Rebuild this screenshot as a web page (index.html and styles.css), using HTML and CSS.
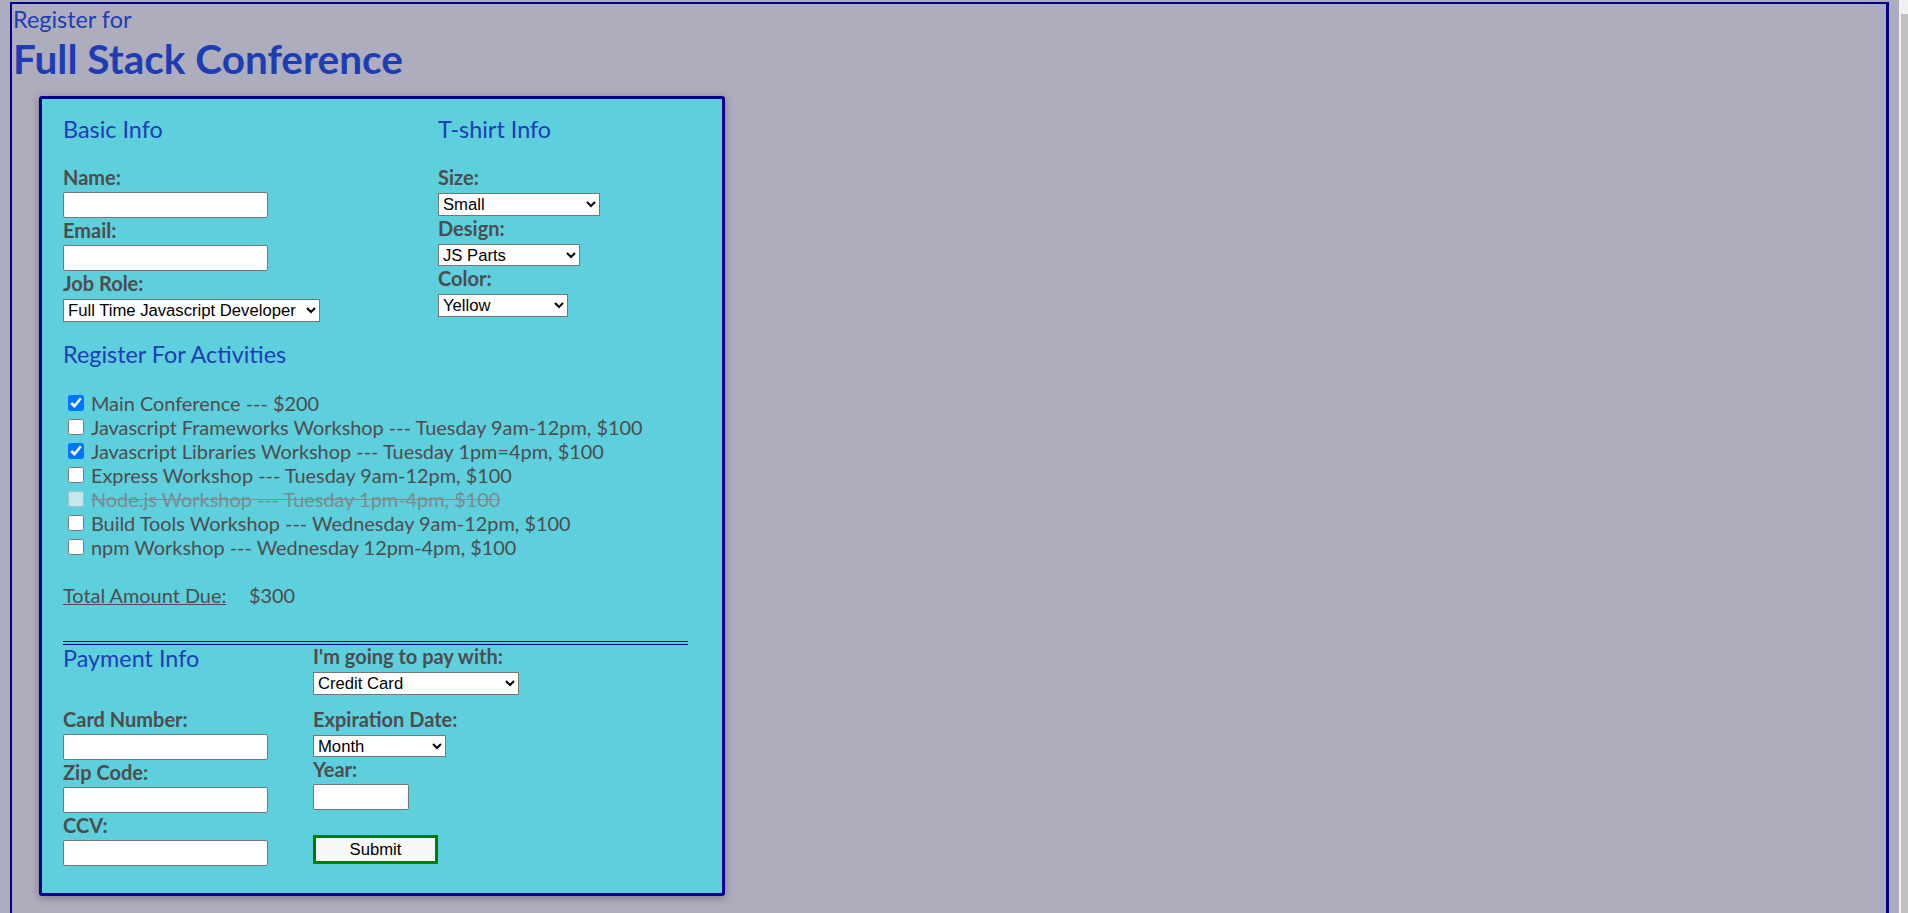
FILE: index.html
```html
<!DOCTYPE html>
<html lang="en">
<head>
<meta charset="utf-8">
<title>Register for Full Stack Conference</title>
<link rel="stylesheet" href="styles.css">
</head>
<body>
<div class="page">
  <header class="masthead">
    <span class="kicker">Register for</span>
    <h1 class="title">Full Stack Conference</h1>
  </header>

  <form class="reg-form" action="#">
    <div class="top-grid">
      <section class="col">
        <h2 class="sec-title">Basic Info</h2>
        <label class="field-label" for="name">Name:</label>
        <input class="text-input" id="name" type="text">
        <label class="field-label" for="mail">Email:</label>
        <input class="text-input" id="mail" type="email">
        <label class="field-label" for="title">Job Role:</label>
        <select class="select sel-job" id="title">
          <option>Full Time Javascript Developer</option>
          <option>Front End Developer</option>
          <option>Back End Developer</option>
          <option>Student</option>
          <option>Other</option>
        </select>
      </section>

      <section class="col">
        <h2 class="sec-title">T-shirt Info</h2>
        <label class="field-label" for="size">Size:</label>
        <select class="select sel-size" id="size">
          <option>Small</option>
          <option>Medium</option>
          <option>Large</option>
          <option>Extra Large</option>
        </select>
        <label class="field-label" for="design">Design:</label>
        <select class="select sel-design" id="design">
          <option>JS Parts</option>
          <option>JS Puns</option>
        </select>
        <label class="field-label" for="color">Color:</label>
        <select class="select sel-color" id="color">
          <option>Yellow</option>
          <option>Cornflower Blue</option>
          <option>Dark Slate Grey</option>
        </select>
      </section>
    </div>

    <section class="activities">
      <h2 class="sec-title act-title">Register For Activities</h2>
      <label class="activity"><input class="check" type="checkbox" checked>Main Conference --- $200</label>
      <label class="activity"><input class="check" type="checkbox">Javascript Frameworks Workshop --- Tuesday 9am-12pm, $100</label>
      <label class="activity"><input class="check" type="checkbox" checked>Javascript Libraries Workshop --- Tuesday 1pm=4pm, $100</label>
      <label class="activity"><input class="check" type="checkbox">Express Workshop --- Tuesday 9am-12pm, $100</label>
      <label class="activity is-off"><input class="check" type="checkbox" disabled>Node.js Workshop --- Tuesday 1pm-4pm, $100</label>
      <label class="activity"><input class="check" type="checkbox">Build Tools Workshop --- Wednesday 9am-12pm, $100</label>
      <label class="activity"><input class="check" type="checkbox">npm Workshop --- Wednesday 12pm-4pm, $100</label>
      <p class="total"><span class="total-label">Total Amount Due:</span><span class="total-value">$300</span></p>
    </section>

    <hr class="divider">

    <div class="pay-grid">
      <h2 class="sec-title pay-title">Payment Info</h2>
      <div class="col">
        <label class="field-label" for="payment">I'm going to pay with:</label>
        <select class="select sel-pay" id="payment">
          <option>Credit Card</option>
          <option>PayPal</option>
          <option>Bitcoin</option>
        </select>
      </div>
      <div class="col">
        <label class="field-label" for="cc-num">Card Number:</label>
        <input class="text-input" id="cc-num" type="text">
        <label class="field-label" for="zip">Zip Code:</label>
        <input class="text-input" id="zip" type="text">
        <label class="field-label" for="cvv">CCV:</label>
        <input class="text-input" id="cvv" type="text">
      </div>
      <div class="col">
        <label class="field-label" for="exp-month">Expiration Date:</label>
        <select class="select sel-month" id="exp-month">
          <option>Month</option>
          <option>1 - January</option>
          <option>2 - February</option>
        </select>
        <label class="field-label" for="exp-year">Year:</label>
        <input class="text-input year-input" id="exp-year" type="text">
        <button class="submit-btn" type="submit">Submit</button>
      </div>
    </div>
  </form>
</div>
<div class="scrollbar" aria-hidden="true"><div class="scroll-thumb"></div></div>
</body>
</html>
```
FILE: styles.css
```css
html {
  background: #adadbe;
  overflow: hidden;
}

body {
  margin: 2px 0 0 10px;
  font-family: Lato, "Open Sans", "Liberation Sans", sans-serif;
}

.page {
  width: 1879px;
  box-sizing: border-box;
  border: 2px solid #00008b;
  border-right-width: 3px;
  padding: 0 0 40px 1px;
}

.kicker {
  display: block;
  margin-top: 1.7px;
  font-size: 23.4px;
  line-height: 26.4px;
  color: #1d3db4;
}

.title {
  margin: 2.8px 0 0;
  font-size: 40.5px;
  line-height: 48px;
  font-weight: 700;
  color: #1d3db4;
}

.reg-form {
  margin: 13.5px 0 0 26px;
  width: 686px;
  box-sizing: border-box;
  background: #5ecfdd;
  border: 3px solid #00008b;
  border-radius: 3px;
  padding: 17px 21px 26px;
  box-shadow: 0 2px 8px rgba(0, 0, 0, 0.3);
}

.top-grid {
  display: grid;
  grid-template-columns: 375px 1fr;
}

.sec-title {
  margin: 0 0 24px;
  font-size: 23.4px;
  line-height: 26px;
  font-weight: 400;
  color: #1d3db4;
}

.field-label {
  display: block;
  padding-bottom: 2.5px;
  font-size: 20px;
  line-height: 23.5px;
  font-weight: 700;
  color: #4d4d4d;
}

.text-input {
  display: block;
  box-sizing: border-box;
  width: 205px;
  height: 26px;
  margin: 0 0 1px;
  padding: 1px 3px;
  border: 1px solid #767676;
  border-radius: 2px;
  background: #fff;
  font: 16.67px "Liberation Sans", Arial, sans-serif;
}

.year-input {
  width: 96px;
}

.select {
  display: block;
  box-sizing: border-box;
  height: 22.5px;
  margin: 1px 0;
  font: 16.67px "Liberation Sans", Arial, sans-serif;
  color: #000;
  background: #fff;
}

.sel-job { width: 257px; }
.sel-size { width: 162px; }
.sel-design { width: 142px; }
.sel-color { width: 130px; }
.sel-pay { width: 206px; }
.sel-month { width: 133px; }

.act-title {
  margin-top: 18.5px;
}

.activity {
  display: block;
  font-size: 19.9px;
  line-height: 24px;
  color: #4d4d4d;
}

.check {
  width: 16px;
  height: 16px;
  margin: 0 6.5px 0 5.4px;
  vertical-align: baseline;
}

.is-off {
  color: #7b8b8e;
  text-decoration: line-through;
}

.total {
  margin: 24px 0 0;
  font-size: 19.9px;
  line-height: 24px;
  color: #4d4d4d;
}

.total-label {
  text-decoration: underline;
}

.total-value {
  margin-left: 22.5px;
}

.divider {
  margin: 33.2px 0 0;
  width: 625px;
  height: 0;
  border: 0;
  border-top: 4px double #00008b;
}

.pay-grid {
  display: grid;
  grid-template-columns: 250px 1fr;
  row-gap: 12px;
  margin-top: 0.5px;
}

.pay-title {
  margin: 0;
}

.submit-btn {
  display: block;
  box-sizing: border-box;
  width: 125px;
  height: 29.4px;
  margin-top: 25px;
  border: 3px solid #008000;
  background: #f8f8f8;
  color: #000;
  font: 16.67px "Liberation Sans", Arial, sans-serif;
  padding: 0;
}

.scrollbar {
  position: fixed;
  top: 0;
  right: 0;
  bottom: 0;
  width: 9px;
  box-sizing: border-box;
  padding: 14px 0 0 2px;
  background: #f1f1f1;
  display: flex;
}

.scroll-thumb {
  flex: 1;
  background: #c1c1c1;
}
```
